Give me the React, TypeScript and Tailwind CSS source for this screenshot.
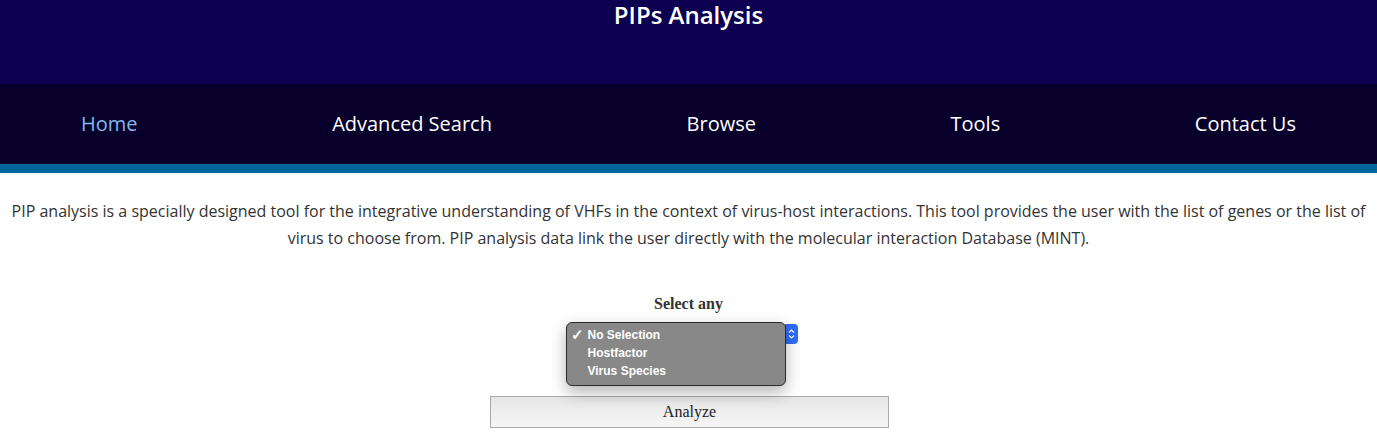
import React from "react";

const navItems = ["Home", "Advanced Search", "Browse", "Tools", "Contact Us"];

export default function App() {
  return (
    <div className="min-h-screen bg-white font-['Open_Sans',sans-serif]">
      <header className="h-[84px] bg-[#0e0050] text-center">
        <h1 className="pt-0 text-[24px] font-semibold leading-[30px] text-white">PIPs Analysis</h1>
      </header>

      <nav className="flex h-[80px] items-center justify-between bg-[#08002a] px-[81px] text-[20px]">
        {navItems.map((item, i) => (
          <a
            key={item}
            href="#"
            className={i === 0 ? "text-[#80b9ec]" : "text-white"}
          >
            {item}
          </a>
        ))}
      </nav>
      <div className="h-[9px] bg-[#00659c]" />

      <p className="mx-auto mt-[25px] px-[6px] text-center text-[16px] leading-[27px] text-[#333]">
        PIP analysis is a specially designed tool for the integrative understanding of VHFs in the context of virus-host interactions. This tool provides the user with the list of genes or the list of virus to choose from. PIP analysis data link the user directly with the molecular interaction Database (MINT).
      </p>

      <div className="mt-[42px] flex flex-col items-center font-['Liberation_Serif',serif]">
        <div className="text-[16px] font-bold leading-[20px] text-[#333]">Select any</div>

        <div className="relative ml-[-14px] mt-[9px] h-[21px] w-[232px]">
          <div className="absolute right-0 top-[1px] flex h-[20px] w-[13px] flex-col items-center justify-center rounded-r-[4px] bg-[#2f6cf5]">
            <svg width="7" height="12" viewBox="0 0 7 12" fill="none" stroke="white" strokeWidth="1.2">
              <path d="M1 4.5 L3.5 2 L6 4.5" />
              <path d="M1 7.5 L3.5 10 L6 7.5" />
            </svg>
          </div>
          <div className="absolute left-0 top-[-1px] h-[64px] w-[220px] rounded-[6px] border border-[#2a2a2a] bg-[#888888] py-[3px] font-['Liberation_Sans',sans-serif] text-[12px] font-bold leading-[18px] text-white shadow-[0_6px_16px_rgba(0,0,0,0.3)]">
            <div className="flex">
              <span className="w-[21px] pl-[4px] text-[15px] leading-[18px]">✓</span>
              <span>No Selection</span>
            </div>
            <div className="pl-[21px]">Hostfactor</div>
            <div className="pl-[21px]">Virus Species</div>
          </div>
        </div>

        <button className="ml-[2px] mt-[52px] h-[32px] w-[399px] border border-[#aaa] bg-gradient-to-b from-[#e6e6e6] to-[#f6f6f6] text-[16px] leading-[30px] text-[#222]">
          Analyze
        </button>
      </div>
    </div>
  );
}
